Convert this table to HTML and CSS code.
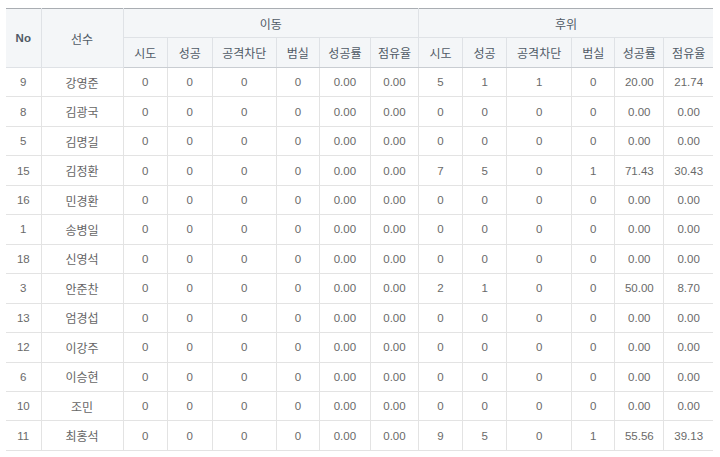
FILE: index.html
```html
<!DOCTYPE html>
<html lang="ko">
<head>
<meta charset="utf-8">
<title>기록</title>
<link rel="stylesheet" href="styles.css">
</head>
<body>
<table class="rec">
  <colgroup>
    <col class="c-no"><col class="c-name">
    <col class="c1"><col class="c2"><col class="c3"><col class="c4"><col class="c5"><col class="c6">
    <col class="c7"><col class="c8"><col class="c9"><col class="c10"><col class="c11"><col class="c12">
  </colgroup>
  <thead>
    <tr class="h1">
      <th rowspan="2" class="no">No</th>
      <th rowspan="2">선수</th>
      <th colspan="6">이동</th>
      <th colspan="6">후위</th>
    </tr>
    <tr class="h2">
      <th>시도</th><th>성공</th><th>공격차단</th><th>범실</th><th>성공률</th><th>점유율</th>
      <th>시도</th><th>성공</th><th>공격차단</th><th>범실</th><th>성공률</th><th>점유율</th>
    </tr>
  </thead>
  <tbody>
    <tr><td>9</td><td>강영준</td><td>0</td><td>0</td><td>0</td><td>0</td><td>0.00</td><td>0.00</td><td>5</td><td>1</td><td>1</td><td>0</td><td>20.00</td><td>21.74</td></tr>
    <tr><td>8</td><td>김광국</td><td>0</td><td>0</td><td>0</td><td>0</td><td>0.00</td><td>0.00</td><td>0</td><td>0</td><td>0</td><td>0</td><td>0.00</td><td>0.00</td></tr>
    <tr><td>5</td><td>김명길</td><td>0</td><td>0</td><td>0</td><td>0</td><td>0.00</td><td>0.00</td><td>0</td><td>0</td><td>0</td><td>0</td><td>0.00</td><td>0.00</td></tr>
    <tr><td>15</td><td>김정환</td><td>0</td><td>0</td><td>0</td><td>0</td><td>0.00</td><td>0.00</td><td>7</td><td>5</td><td>0</td><td>1</td><td>71.43</td><td>30.43</td></tr>
    <tr><td>16</td><td>민경환</td><td>0</td><td>0</td><td>0</td><td>0</td><td>0.00</td><td>0.00</td><td>0</td><td>0</td><td>0</td><td>0</td><td>0.00</td><td>0.00</td></tr>
    <tr><td>1</td><td>송병일</td><td>0</td><td>0</td><td>0</td><td>0</td><td>0.00</td><td>0.00</td><td>0</td><td>0</td><td>0</td><td>0</td><td>0.00</td><td>0.00</td></tr>
    <tr><td>18</td><td>신영석</td><td>0</td><td>0</td><td>0</td><td>0</td><td>0.00</td><td>0.00</td><td>0</td><td>0</td><td>0</td><td>0</td><td>0.00</td><td>0.00</td></tr>
    <tr><td>3</td><td>안준찬</td><td>0</td><td>0</td><td>0</td><td>0</td><td>0.00</td><td>0.00</td><td>2</td><td>1</td><td>0</td><td>0</td><td>50.00</td><td>8.70</td></tr>
    <tr><td>13</td><td>엄경섭</td><td>0</td><td>0</td><td>0</td><td>0</td><td>0.00</td><td>0.00</td><td>0</td><td>0</td><td>0</td><td>0</td><td>0.00</td><td>0.00</td></tr>
    <tr><td>12</td><td>이강주</td><td>0</td><td>0</td><td>0</td><td>0</td><td>0.00</td><td>0.00</td><td>0</td><td>0</td><td>0</td><td>0</td><td>0.00</td><td>0.00</td></tr>
    <tr><td>6</td><td>이승현</td><td>0</td><td>0</td><td>0</td><td>0</td><td>0.00</td><td>0.00</td><td>0</td><td>0</td><td>0</td><td>0</td><td>0.00</td><td>0.00</td></tr>
    <tr><td>10</td><td>조민</td><td>0</td><td>0</td><td>0</td><td>0</td><td>0.00</td><td>0.00</td><td>0</td><td>0</td><td>0</td><td>0</td><td>0.00</td><td>0.00</td></tr>
    <tr><td>11</td><td>최홍석</td><td>0</td><td>0</td><td>0</td><td>0</td><td>0.00</td><td>0.00</td><td>9</td><td>5</td><td>0</td><td>1</td><td>55.56</td><td>39.13</td></tr>
  </tbody>
</table>
</body>
</html>
```
FILE: styles.css
```css
html, body {
  margin: 0;
  padding: 0;
  background: #ffffff;
}

body {
  padding: 8px 0 0 6px;
  font-family: "Liberation Sans", "Noto Sans CJK KR", sans-serif;
  font-size: 12px;
}

.rec {
  border-collapse: collapse;
  table-layout: fixed;
  width: 707px;
  border-top: 1px solid #a9adb2;
}

.c-no { width: 35px; }
.c-name { width: 82px; }
.c1 { width: 44px; }
.c2 { width: 45px; }
.c3 { width: 64px; }
.c4 { width: 43px; }
.c5 { width: 51px; }
.c6 { width: 48px; }
.c7 { width: 44px; }
.c8 { width: 44px; }
.c9 { width: 65px; }
.c10 { width: 43px; }
.c11 { width: 49px; }
.c12 { width: 49px; }

.rec th {
  background: #f4f6f8;
  color: #505a66;
  font-weight: normal;
  font-family: "Noto Sans CJK KR", "Liberation Sans", sans-serif;
  font-size: 12px;
  padding: 0;
  text-align: center;
  border: 1px solid #dfe2e6;
  border-top: none;
}

.rec th.no {
  font-family: "Liberation Sans", sans-serif;
  font-weight: bold;
  font-size: 11.5px;
  color: #505a66;
}

.rec .h1 th { height: 28px; }
.rec .h2 th { height: 29px; border-bottom-color: #c9cdd2; }

.rec td {
  height: 28.46px;
  padding: 0;
  text-align: center;
  color: #6a6a6a;
  font-size: 11.5px;
  border: 1px solid #e3e3e3;
  border-top: none;
}

.rec td:nth-child(2) {
  font-family: "Noto Sans CJK KR", sans-serif;
  font-size: 12px;
  color: #666666;
}

.rec th:first-child, .rec td:first-child { border-left: none; }
.rec tr > :last-child { border-right: none; }
.rec .h1 th:first-child { border-left: none; }
```
